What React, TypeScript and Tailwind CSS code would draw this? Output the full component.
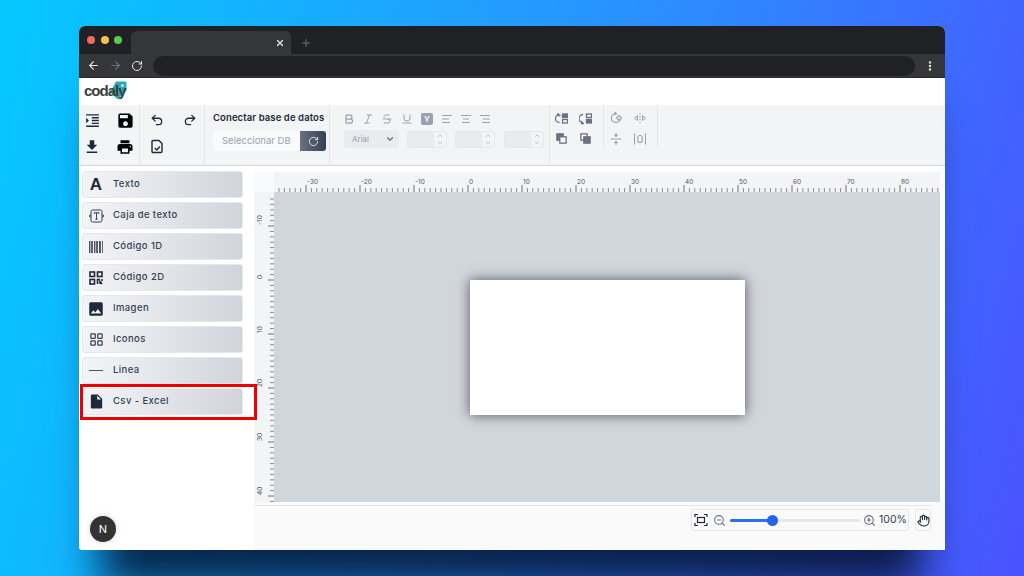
import { ArrowLeft, ArrowRight, Bold, ChevronDown, ChevronUp, Italic, AlignCenter, AlignLeft, AlignRight, Plus, Redo2, RotateCw, Strikethrough, Underline, Undo2, X, ZoomIn, ZoomOut, EllipsisVertical, LayoutGrid, Hand } from 'lucide-react';
import { MdFileDownload, MdFormatIndentIncrease, MdImage, MdInsertDriveFile, MdPrint, MdSave } from 'react-icons/md';
import type { ReactNode } from 'react';

const UI_FONT = 'font-["Inter","Noto_Sans",sans-serif]';

function TextBoxIcon() {
  return (
    <svg width="17" height="16" viewBox="0 0 17 16" fill="none" stroke="#374151" strokeWidth="1">
      <rect x="3" y="2" width="11" height="12" rx="1.500" />
      <path d="M6 5.800V4.800h5v1M8.500 4.800v6.400M7.300 11.200h2.400" />
      <path d="M3 6.500 1 8l2 1.500M14 6.500 16 8l-2 1.500" />
    </svg>
  );
}

function BarcodeIcon() {
  const bars = [0, 2, 3, 5, 7, 8, 10, 11, 13];
  return (
    <svg width="15" height="12" viewBox="0 0 15 12" fill="#4b5563">
      {bars.map((b, i) => (
        <rect key={b} x={b} y="0" width={i % 3 === 0 ? 1.400 : 0.900} height="12" />
      ))}
    </svg>
  );
}

function QrIcon() {
  return (
    <svg width="14" height="14" viewBox="0 0 14 14" fill="none" stroke="#1f2937" strokeWidth="1.600">
      <rect x="1" y="1" width="4.500" height="4.500" />
      <rect x="8.500" y="1" width="4.500" height="4.500" />
      <rect x="1" y="8.500" width="4.500" height="4.500" />
      <path d="M8.500 13V8.500h2.500M13 8v2M11 13v-2.500l2 2.500" />
    </svg>
  );
}

function LineIcon() {
  return <div className="w-[14px] h-[1px] bg-gray-600" />;
}

const tools: { label: string; icon: ReactNode }[] = [
  { label: 'Texto', icon: <span className='font-["Liberation_Sans",sans-serif] text-[17px] leading-[18px] font-bold text-gray-800'>A</span> },
  { label: 'Caja de texto', icon: <TextBoxIcon /> },
  { label: 'Código 1D', icon: <BarcodeIcon /> },
  { label: 'Código 2D', icon: <QrIcon /> },
  { label: 'Imagen', icon: <MdImage size={18} className="text-gray-800" /> },
  { label: 'Iconos', icon: <LayoutGrid size={15} className="text-gray-700" /> },
  { label: 'Linea', icon: <LineIcon /> },
  { label: 'Csv - Excel', icon: <MdInsertDriveFile size={17} className="text-gray-800" /> },
];

function ToolButton({ label, icon }: { label: string; icon: ReactNode }) {
  return (
    <div className="flex items-center w-[161px] h-[27px] rounded-[3px] border border-gray-200 bg-gradient-to-r from-gray-100 to-gray-300">
      <div className="w-[26px] flex justify-center">{icon}</div>
      <span className="ml-[4px] text-[9.500px] font-medium tracking-[0.400px] text-gray-700">{label}</span>
    </div>
  );
}

function TopRuler() {
  const ticks = [];
  for (let u = -36; u <= 87; u++) {
    const x = 194 + u * 5.4;
    if (x < 2) continue;
    const major = u % 10 === 0;
    ticks.push(<line key={u} x1={x} x2={x} y1={major ? 13 : 16} y2={20} stroke="#6b7280" strokeWidth={major ? 1 : 0.8} />);
    if (major) {
      ticks.push(
        <text key={`t${u}`} x={x + 1} y={12} fontSize="6.500" fill="#4b5563" fontFamily="Inter, sans-serif">
          {u}
        </text>,
      );
    }
  }
  return (
    <svg width="666" height="20" className="block">
      {ticks}
    </svg>
  );
}

function LeftRuler() {
  const ticks = [];
  for (let u = -16; u <= 41; u++) {
    const y = 88 + u * 5.4;
    if (y < 2 || y > 310) continue;
    const major = u % 10 === 0;
    ticks.push(<line key={u} y1={y} y2={y} x1={major ? 14 : 16} x2={20} stroke="#6b7280" strokeWidth={major ? 1 : 0.8} />);
    if (major) {
      ticks.push(
        <text key={`t${u}`} transform={`translate(8 ${y - 1}) rotate(-90)`} fontSize="6.500" fill="#4b5563" fontFamily="Inter, sans-serif">
          {u}
        </text>,
      );
    }
  }
  return (
    <svg width="20" height="310" className="block">
      {ticks}
    </svg>
  );
}

function Spinner() {
  return (
    <div className="flex w-[40px] h-[17px] rounded-[3px] border border-gray-200 bg-gray-200/70">
      <div className="flex-1" />
      <div className="w-[13px] flex flex-col items-center justify-center bg-gray-100 rounded-r-[3px] border-l border-gray-200 text-gray-400">
        <ChevronUp size={8} />
        <ChevronDown size={8} />
      </div>
    </div>
  );
}

function Logo() {
  return (
    <div className="relative w-[46px] h-[22px] flex items-center">
      <svg width="18" height="21" viewBox="0 0 18 20" className="absolute left-[25px] top-[-1px]">
        <path d="M7 1h9a1.500 1.500 0 0 1 1.500 1.500V10L9 19 1 12z" fill="#29a9b8" />
        <circle cx="13.500" cy="5" r="1.500" fill="#bff0f5" />
      </svg>
      <span className='relative font-["Liberation_Sans",sans-serif] text-[15px] font-bold tracking-[-1px] text-[#3a3f3b]'>codaly</span>
    </div>
  );
}

export default function App() {
  return (
    <div className={`w-[1024px] h-[576px] overflow-hidden flex pt-[26px] pl-[79px] bg-[linear-gradient(105deg,#05c8ff_0%,#2a90ff_55%,#4a52ff_100%)] ${UI_FONT}`}>
      <div className="relative w-[866px] h-[524px] flex flex-col rounded-t-[6px] rounded-b-[3px] bg-white shadow-[0_60px_40px_-22px_rgba(5,15,45,0.85)]">
        {/* browser chrome */}
        <div className="h-[28px] flex rounded-t-[6px] bg-[#202124] pt-[5px]">
          <div className="flex items-center gap-[5.500px] w-[52px] pl-[8px] pb-[5px]">
            <span className="w-[8px] h-[8px] rounded-full bg-[#ed6a5e]" />
            <span className="w-[8px] h-[8px] rounded-full bg-[#f4bf4f]" />
            <span className="w-[8px] h-[8px] rounded-full bg-[#61c554]" />
          </div>
          <div className="w-[160px] rounded-t-[6px] bg-[#35363a] flex items-center justify-end pr-[6px]">
            <X size={10} strokeWidth={3} className="text-gray-200" />
          </div>
          <div className="ml-[9px] flex items-center">
            <Plus size={12} className="text-gray-500" />
          </div>
        </div>
        <div className="h-[24px] flex items-center bg-[#35363a] border-b border-[#2a2b2e]">
          <div className="w-[74px] flex items-center pl-[8px] gap-[9px]">
            <ArrowLeft size={13} className="text-gray-200" />
            <ArrowRight size={13} className="text-gray-500" />
            <RotateCw size={12} className="text-gray-200" />
          </div>
          <div className="w-[762px] h-[20px] rounded-full bg-[#202124]" />
          <div className="flex-1 flex justify-center">
            <EllipsisVertical size={12} strokeWidth={3} className="text-gray-200" />
          </div>
        </div>

        {/* logo bar */}
        <div className="h-[27px] flex items-center pl-[5px]">
          <Logo />
        </div>

        {/* toolbar */}
        <div className="h-[61px] flex bg-gray-100 border-b border-gray-300 text-gray-800">
          <div className="w-[61px] border-r border-gray-200 grid grid-cols-[26px_20px] gap-x-[10px] grid-rows-2 pt-[2px] pb-[5px] place-items-center">
            <MdFormatIndentIncrease size={17} />
            <MdSave size={19} className="text-black" />
            <MdFileDownload size={18} />
            <MdPrint size={18} className="text-black" />
          </div>
          <div className="w-[65px] border-r border-gray-200 grid grid-cols-[34px_20px] gap-x-[6px] grid-rows-2 pt-[2px] pb-[5px] place-items-center">
            <Undo2 size={14} strokeWidth={2.200} />
            <Redo2 size={14} strokeWidth={2.200} />
            <svg width="15" height="15" viewBox="0 0 15 15" fill="none" stroke="currentColor" strokeWidth="1.400">
              <path d="M3 1.500h6l3 3v8a1 1 0 0 1-1 1H3a1 1 0 0 1-1-1v-10a1 1 0 0 1 1-1z" />
              <path d="m4.800 9 2 2 3-3.500" />
            </svg>
          </div>
          <div className="w-[125px] border-r border-gray-200 pl-[8px] pt-[7px]">
            <div className="text-[9.500px] leading-[12px] font-semibold tracking-[0.100px] whitespace-nowrap text-gray-800">Conectar base de datos</div>
            <div className="mt-[7px] flex w-[113px] h-[20px] rounded-[3px] bg-gray-50">
              <div className="flex-1 pl-[9px] text-[9.500px] leading-[20px] whitespace-nowrap text-gray-400">Seleccionar DB</div>
              <div className="w-[26px] rounded-r-[3px] flex items-center justify-center bg-gradient-to-r from-gray-500 to-gray-700">
                <RotateCw size={11} className="text-gray-200" />
              </div>
            </div>
          </div>
          <div className="w-[220px] border-r border-gray-200 pl-[13px] pt-[6px] text-gray-400">
            <div className="flex items-center h-[16px]">
              <Bold size={12} strokeWidth={2.500} className="mr-[7px]" />
              <Italic size={12} className="mr-[7px]" />
              <Strikethrough size={12} className="mr-[8px]" />
              <Underline size={12} className="mr-[8px]" />
              <div className="w-[12px] h-[12px] rounded-[2px] bg-gray-400 text-gray-100 text-[8px] font-bold leading-[12px] text-center mr-[8px]">Y</div>
              <AlignLeft size={12} className="mr-[7px]" />
              <AlignCenter size={12} className="mr-[7px]" />
              <AlignRight size={12} />
            </div>
            <div className="mt-[3px] ml-[1px] flex items-center">
              <div className="w-[55px] h-[18px] rounded-[3px] bg-gray-200/70 flex items-center justify-between pl-[8px] pr-[4px] text-[8px] text-gray-400">
                Arial
                <ChevronDown size={10} strokeWidth={3} className="text-gray-500" />
              </div>
              <div className="ml-[8px]"><Spinner /></div>
              <div className="ml-[8px]"><Spinner /></div>
              <div className="ml-[9px]"><Spinner /></div>
            </div>
          </div>
          <div className="w-[54px] border-r border-gray-200 grid grid-cols-[22px_24px] gap-x-[1px] grid-rows-2 h-[44px] pt-[3px] place-items-center text-gray-500">
            <svg width="13" height="13" viewBox="0 0 13 13" fill="none" stroke="currentColor" strokeWidth="1.300"><path d="M4.500 2.500A4 4 0 0 0 4.500 10.500M3 1v2.500h2.500" /><rect x="7.500" y="2" width="5" height="3.500" fill="currentColor" /><rect x="7.500" y="7.500" width="5" height="3.500" /></svg>
            <svg width="13" height="13" viewBox="0 0 13 13" fill="none" stroke="currentColor" strokeWidth="1.300"><path d="M4 2.500A4 4 0 0 0 4 10.500M2.500 9v2.500H5" /><rect x="7.500" y="2" width="5" height="3.500" /><rect x="7.500" y="7.500" width="5" height="3.500" fill="currentColor" /></svg>
            <svg width="11" height="11" viewBox="0 0 13 13" fill="none" stroke="currentColor" strokeWidth="1.500"><rect x="1" y="1" width="7.500" height="7.500" fill="currentColor" /><rect x="4.500" y="4.500" width="7.500" height="7.500" fill="#f3f4f6" /></svg>
            <svg width="11" height="11" viewBox="0 0 13 13" fill="none" stroke="currentColor" strokeWidth="1.500"><rect x="1" y="1" width="7.500" height="7.500" /><rect x="4.500" y="4.500" width="7.500" height="7.500" fill="currentColor" /></svg>
          </div>
          <div className="w-[54px] border-r border-gray-200 grid grid-cols-[24px_24px] grid-rows-2 h-[44px] pt-[3px] place-items-center text-gray-400">
            <svg width="14" height="14" viewBox="0 0 14 14" fill="none" stroke="currentColor" strokeWidth="1.100"><path d="M7 2.500A4.500 4.500 0 1 0 11 9M5.500.8 7.500 2.500 5.500 4.200" /><path d="m10 4.500 2.500 2.500L10 9.500 7.500 7z" /></svg>
            <svg width="14" height="14" viewBox="0 0 14 14" fill="none" stroke="currentColor" strokeWidth="1"><path d="M7 2v10" strokeDasharray="1.500 1.500" /><path d="M4.500 4.500 1.500 7l3 2.500zM9.500 4.500l3 2.500-3 2.500z" /></svg>
            <svg width="14" height="14" viewBox="0 0 14 14" fill="none" stroke="currentColor" strokeWidth="1.100"><path d="M1.500 7h11M7 1v3.500M7 9.500V13M5.500 3 7 4.500 8.500 3M5.500 11 7 9.500 8.500 11" /></svg>
            <svg width="14" height="14" viewBox="0 0 14 14" fill="none" stroke="currentColor" strokeWidth="1.100"><path d="M1.500 1.500v11M12.500 1.500v11" /><rect x="4.800" y="3.500" width="4.400" height="7" rx="2" /></svg>
          </div>
        </div>

        {/* main */}
        <div className="flex-1 flex min-h-0">
          <aside className="w-[175px] flex flex-col pl-[3px] pt-[5px] pb-[8px]">
            <div className="flex flex-col gap-[4px]">
              {tools.map((t) => (
                <ToolButton key={t.label} label={t.label} icon={t.icon} />
              ))}
            </div>
            <div className="mt-auto ml-[8px] w-[26px] h-[26px] rounded-full bg-[#333] flex items-center justify-center text-white text-[11px] font-normal shadow-[0_0_6px_rgba(0,0,0,0.15)]">N</div>
          </aside>
          <div className="flex-1 flex flex-col bg-neutral-50">
            <div className="h-[6px] bg-white" />
            <div className="flex bg-white pr-[5px]">
              <div className="w-[20px] h-[20px] bg-gray-50" />
              <div className="flex-1 h-[20px] bg-gray-100"><TopRuler /></div>
            </div>
            <div className="flex bg-white pr-[5px]">
              <div className="w-[20px] h-[310px] bg-gray-100"><LeftRuler /></div>
              <div className="flex-1 h-[310px] bg-gray-300 flex items-start pl-[196px] pt-[88px]">
                <div className="w-[275px] h-[135px] bg-white shadow-[0_0_12px_rgba(0,0,0,0.6)]" />
              </div>
            </div>
            <div className="mt-[3px] mr-[13px] h-[1px] bg-gray-200" />
            <div className="flex-1 flex justify-end pt-[3px] pr-[14px] gap-[6px]">
              <div className="w-[218px] h-[22px] rounded-[3px] border border-gray-200 flex items-center px-[2px]">
                <svg width="14" height="14" viewBox="0 0 14 14" fill="none" stroke="#1f2937" strokeWidth="1.200" className="shrink-0">
                  <path d="M1 4V1.500h3M10 1.500h3V4M13 10v2.500h-3M4 12.500H1V10" />
                  <rect x="3.500" y="4.500" width="7" height="5" />
                </svg>
                <ZoomOut size={13} className="ml-[5px] shrink-0 text-gray-500" />
                <div className="relative ml-[4px] shrink-0 w-[130px] h-[3px] rounded-full bg-gray-200">
                  <div className="h-[3px] w-[42px] rounded-full bg-[#2f6fed]" />
                  <div className="absolute left-[37px] top-[-4px] w-[11px] h-[11px] rounded-full bg-[#2563eb]" />
                </div>
                <ZoomIn size={13} className="ml-[3px] shrink-0 text-gray-500" />
                <span className="ml-[3px] text-[10.500px] text-gray-700">100%</span>
              </div>
              <div className="w-[16px] h-[22px] rounded-[3px] border border-gray-200 flex items-center justify-center">
                <Hand size={13} className="shrink-0 text-gray-800" />
              </div>
            </div>
          </div>
        </div>

        {/* highlight around the Csv - Excel tool */}
        <div className="absolute left-[1px] top-[358px] w-[177px] h-[36px] border-[3px] border-[#ee0000]" />
      </div>
    </div>
  );
}
